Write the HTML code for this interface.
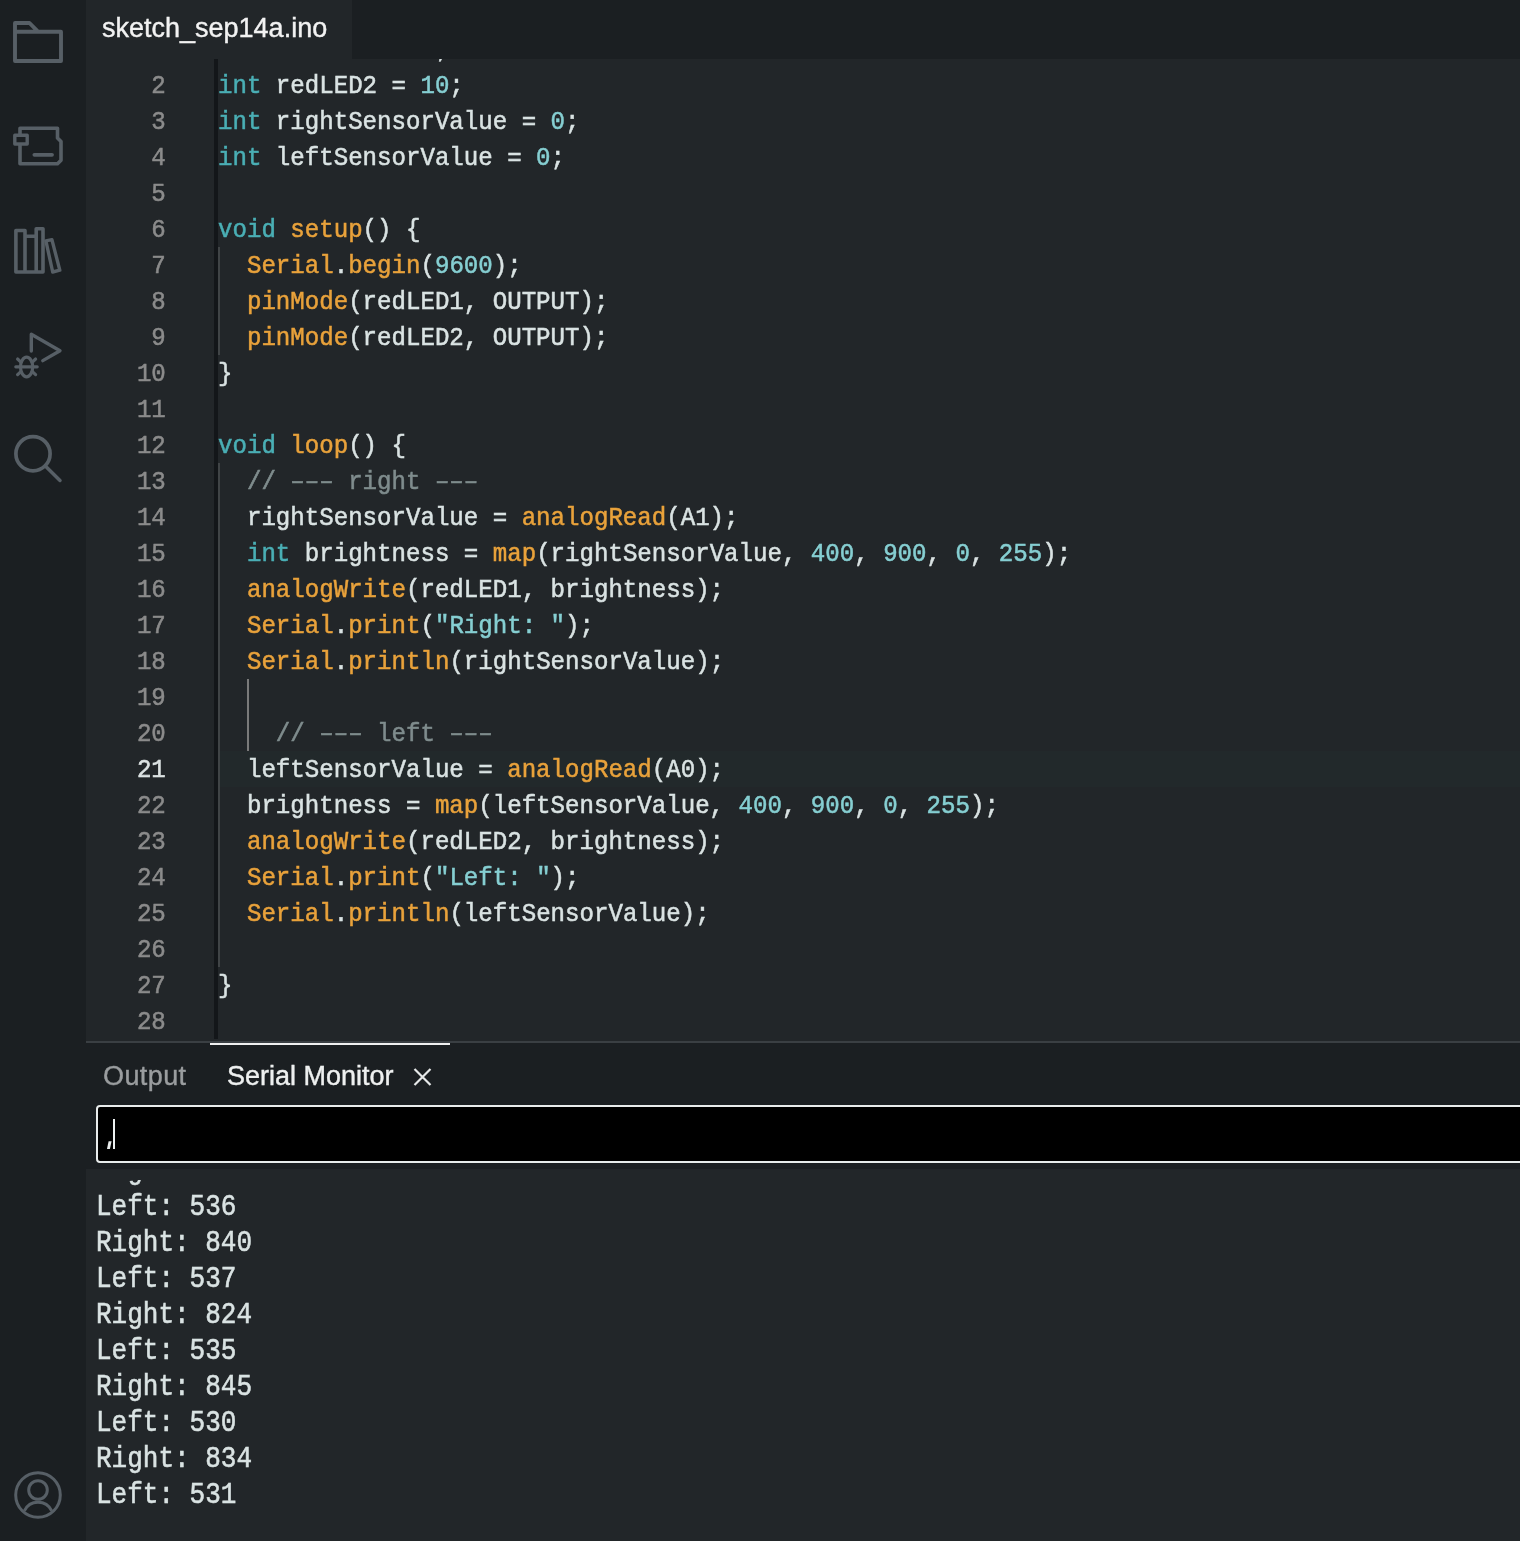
<!DOCTYPE html>
<html><head><meta charset="utf-8">
<style>
html,body{margin:0;padding:0;width:1520px;height:1541px;overflow:hidden;background:#1b1f22;}
*{box-sizing:border-box;}
.abs{position:absolute;}
#sidebar{position:absolute;left:0;top:0;width:86px;height:1541px;background:#1b1f22;}
#tabbar{position:absolute;left:86px;top:0;width:1434px;height:59px;background:#1b1f22;}
#tab{position:absolute;left:86px;top:0;width:266px;height:59px;background:#222629;}
#tabtxt{position:absolute;left:102px;top:8px;font:27px/40px "Liberation Sans",sans-serif;color:#f2f2f2;white-space:pre;-webkit-text-stroke:0.4px currentColor;will-change:transform;}
#editor{position:absolute;left:86px;top:59px;width:1434px;height:982px;background:#222629;overflow:hidden;}
.ln{position:absolute;left:0;width:79.8px;text-align:right;font:24.1px/36px "Liberation Mono",monospace;color:#858a8a;white-space:pre;transform:scaleY(1.1);transform-origin:0 24.4px;-webkit-text-stroke:0.5px currentColor;will-change:transform;}
.cl{position:absolute;left:132.2px;font:24.1px/36px "Liberation Mono",monospace;color:#dae3e3;white-space:pre;transform:scaleY(1.1);transform-origin:0 24.4px;-webkit-text-stroke:0.5px currentColor;will-change:transform;}
.k{color:#4aafb5}.f{color:#e9a23b}.n{color:#86cfd2}.c{color:#7f8c8d}.w{color:#dae3e3}
#darkline{position:absolute;left:128px;top:0;width:4px;height:980px;background:#131619;}
.guide{position:absolute;width:2px;background:#404446;}
#divider{position:absolute;left:86px;top:1041px;width:1434px;height:2px;background:#3a3f43;}
#panel{position:absolute;left:86px;top:1043px;width:1434px;height:498px;background:#1b1f22;}
#indicator{position:absolute;left:210px;top:1043px;width:240px;height:2px;background:#f0f0f0;}
.ptab{position:absolute;top:1056px;font:27px/40px "Liberation Sans",sans-serif;white-space:pre;-webkit-text-stroke:0.4px currentColor;will-change:transform;}
#input{position:absolute;left:96px;top:1105px;width:1440px;height:58px;background:#000;border:2px solid #e8ecec;border-radius:4px;}
#outarea{position:absolute;left:86px;top:1169px;width:1434px;height:372px;background:#222629;overflow:hidden;}
#outclip{position:absolute;left:0;top:10.5px;width:1434px;height:362px;overflow:hidden;}
.ol{position:absolute;left:10px;font:26px/36px "Liberation Mono",monospace;color:#dae3e3;white-space:pre;transform:scaleY(1.13);transform-origin:0 24.92px;-webkit-text-stroke:0.5px currentColor;will-change:transform;}
</style></head><body>
<div id="sidebar"></div>
<svg class="abs" style="left:0;top:0" width="86" height="1541" viewBox="0 0 86 1541" fill="none" stroke="#575f66" stroke-width="3.9" stroke-linejoin="round" stroke-linecap="round">
  <!-- folder -->
  <path d="M15 61 V23 H29.5 L38 31.7 H61 V61 Z M15 31.7 H38"/>
  <!-- board -->
  <path d="M20 128.3 H57.5 V138 L61 141.5 V160.3 L57.5 163.8 H20 Z" stroke-width="3.6"/>
  <rect x="14.8" y="135.2" width="12.4" height="8.8" fill="#1b1f22" stroke-width="3.4"/>
  <path d="M34.4 154.8 H52" stroke-width="3.8"/>
  <!-- library -->
  <path d="M15.9 272 V230.5 H25 V272 M25 236.3 H36.2 M36.2 272 V228.8 H43 V272 H15.9" stroke-width="3.6"/>
  <path d="M45.9 240.9 L51.9 239.6 L59.8 270.2 L52.7 272 Z" stroke-width="3.4"/>
  <!-- debug -->
  <path d="M31.3 351 V334.2 L60 350.7 L42.8 360.6" stroke-width="3.4"/>
  <ellipse cx="26.6" cy="367" rx="6.1" ry="9.8" stroke-width="3.2"/>
  <path d="M15.8 366.8 H37.2 M17.6 359 L20.6 361.8 M35.6 359 L32.6 361.8 M17.6 374.6 L20.6 371.8 M35.6 374.6 L32.6 371.8" stroke-width="3.2"/>
  <!-- search -->
  <circle cx="33" cy="453.7" r="17.1" stroke-width="3.7"/>
  <path d="M45.6 466.3 L60 480.5" stroke-width="3.5"/>
  <!-- user -->
  <circle cx="38" cy="1495" r="22.3" stroke-width="3"/>
  <circle cx="38" cy="1490" r="9.3" stroke-width="3"/>
  <path d="M24.3 1510.8 A15.2 15.2 0 0 1 51.7 1510.8" stroke-width="3" stroke-linecap="butt"/>
</svg>
<div id="tabbar"></div>
<div id="tab"></div>
<div id="tabtxt">sketch_sep14a.ino</div>
<div id="editor"><div class="abs" style="left:134px;top:692px;width:1300px;height:36px;background:#22292b"></div><div class="ln" style="top:-26.11px;color:#8b8b8b">1</div><div class="cl" style="top:-26.11px"><span class="k">int</span><span class="w"> redLED1 = </span><span class="n">9</span><span class="w">;</span></div><div class="ln" style="top:9.89px;color:#8b8b8b">2</div><div class="cl" style="top:9.89px"><span class="k">int</span><span class="w"> redLED2 = </span><span class="n">10</span><span class="w">;</span></div><div class="ln" style="top:45.89px;color:#8b8b8b">3</div><div class="cl" style="top:45.89px"><span class="k">int</span><span class="w"> rightSensorValue = </span><span class="n">0</span><span class="w">;</span></div><div class="ln" style="top:81.89px;color:#8b8b8b">4</div><div class="cl" style="top:81.89px"><span class="k">int</span><span class="w"> leftSensorValue = </span><span class="n">0</span><span class="w">;</span></div><div class="ln" style="top:117.89px;color:#8b8b8b">5</div><div class="ln" style="top:153.89px;color:#8b8b8b">6</div><div class="cl" style="top:153.89px"><span class="k">void</span><span class="w"> </span><span class="f">setup</span><span class="w">() {</span></div><div class="ln" style="top:189.89px;color:#8b8b8b">7</div><div class="cl" style="top:189.89px"><span class="w">  </span><span class="f">Serial</span><span class="w">.</span><span class="f">begin</span><span class="w">(</span><span class="n">9600</span><span class="w">);</span></div><div class="ln" style="top:225.89px;color:#8b8b8b">8</div><div class="cl" style="top:225.89px"><span class="w">  </span><span class="f">pinMode</span><span class="w">(redLED1, OUTPUT);</span></div><div class="ln" style="top:261.89px;color:#8b8b8b">9</div><div class="cl" style="top:261.89px"><span class="w">  </span><span class="f">pinMode</span><span class="w">(redLED2, OUTPUT);</span></div><div class="ln" style="top:297.89px;color:#8b8b8b">10</div><div class="cl" style="top:297.89px"><span class="w">}</span></div><div class="ln" style="top:333.89px;color:#8b8b8b">11</div><div class="ln" style="top:369.89px;color:#8b8b8b">12</div><div class="cl" style="top:369.89px"><span class="k">void</span><span class="w"> </span><span class="f">loop</span><span class="w">() {</span></div><div class="ln" style="top:405.89px;color:#8b8b8b">13</div><div class="cl" style="top:405.89px"><span class="w">  </span><span class="c">// ––– right –––</span></div><div class="ln" style="top:441.89px;color:#8b8b8b">14</div><div class="cl" style="top:441.89px"><span class="w">  rightSensorValue = </span><span class="f">analogRead</span><span class="w">(A1);</span></div><div class="ln" style="top:477.89px;color:#8b8b8b">15</div><div class="cl" style="top:477.89px"><span class="w">  </span><span class="k">int</span><span class="w"> brightness = </span><span class="f">map</span><span class="w">(rightSensorValue, </span><span class="n">400</span><span class="w">, </span><span class="n">900</span><span class="w">, </span><span class="n">0</span><span class="w">, </span><span class="n">255</span><span class="w">);</span></div><div class="ln" style="top:513.89px;color:#8b8b8b">16</div><div class="cl" style="top:513.89px"><span class="w">  </span><span class="f">analogWrite</span><span class="w">(redLED1, brightness);</span></div><div class="ln" style="top:549.89px;color:#8b8b8b">17</div><div class="cl" style="top:549.89px"><span class="w">  </span><span class="f">Serial</span><span class="w">.</span><span class="f">print</span><span class="w">(</span><span class="n">&quot;Right: &quot;</span><span class="w">);</span></div><div class="ln" style="top:585.89px;color:#8b8b8b">18</div><div class="cl" style="top:585.89px"><span class="w">  </span><span class="f">Serial</span><span class="w">.</span><span class="f">println</span><span class="w">(rightSensorValue);</span></div><div class="ln" style="top:621.89px;color:#8b8b8b">19</div><div class="ln" style="top:657.89px;color:#8b8b8b">20</div><div class="cl" style="top:657.89px"><span class="w">    </span><span class="c">// ––– left –––</span></div><div class="ln" style="top:693.89px;color:#dde3e3">21</div><div class="cl" style="top:693.89px"><span class="w">  leftSensorValue = </span><span class="f">analogRead</span><span class="w">(A0);</span></div><div class="ln" style="top:729.89px;color:#8b8b8b">22</div><div class="cl" style="top:729.89px"><span class="w">  brightness = </span><span class="f">map</span><span class="w">(leftSensorValue, </span><span class="n">400</span><span class="w">, </span><span class="n">900</span><span class="w">, </span><span class="n">0</span><span class="w">, </span><span class="n">255</span><span class="w">);</span></div><div class="ln" style="top:765.89px;color:#8b8b8b">23</div><div class="cl" style="top:765.89px"><span class="w">  </span><span class="f">analogWrite</span><span class="w">(redLED2, brightness);</span></div><div class="ln" style="top:801.89px;color:#8b8b8b">24</div><div class="cl" style="top:801.89px"><span class="w">  </span><span class="f">Serial</span><span class="w">.</span><span class="f">print</span><span class="w">(</span><span class="n">&quot;Left: &quot;</span><span class="w">);</span></div><div class="ln" style="top:837.89px;color:#8b8b8b">25</div><div class="cl" style="top:837.89px"><span class="w">  </span><span class="f">Serial</span><span class="w">.</span><span class="f">println</span><span class="w">(leftSensorValue);</span></div><div class="ln" style="top:873.89px;color:#8b8b8b">26</div><div class="ln" style="top:909.89px;color:#8b8b8b">27</div><div class="cl" style="top:909.89px"><span class="w">}</span></div><div class="ln" style="top:945.89px;color:#8b8b8b">28</div>
<div id="darkline"></div>
<div class="guide" style="left:132px;top:188px;height:108px"></div>
<div class="guide" style="left:132px;top:404px;height:504px"></div>
<div class="guide" style="left:161px;top:620px;height:72px;background:#7a7a7a"></div>
</div>
<div id="divider"></div>
<div id="panel"></div>
<div id="indicator"></div>
<div class="ptab" style="left:103px;color:#9a9d9f;letter-spacing:0.4px">Output</div>
<div class="ptab" style="left:227px;color:#eef0f0">Serial Monitor</div>
<svg class="abs" style="left:410px;top:1065px" width="26" height="24" viewBox="0 0 26 24" stroke="#e6e9e9" stroke-width="2.2" fill="none"><path d="M4.5 4 L20.5 20 M20.5 4 L4.5 20"/></svg>
<div id="input"></div>
<svg class="abs" style="left:100px;top:1135px" width="20" height="20" viewBox="100 1135 20 20"><path d="M108.6 1141.2 L111.6 1141.2 L109.9 1149 L107 1149 Z" fill="#e8ecec"/></svg>
<div class="abs" style="left:113px;top:1119px;width:2px;height:30px;background:#eef2f2"></div>
<div id="outarea"><div id="outclip"><div class="ol" style="top:-25.02px">Right: 840</div><div class="ol" style="top:10.98px">Left: 536</div><div class="ol" style="top:46.98px">Right: 840</div><div class="ol" style="top:82.98px">Left: 537</div><div class="ol" style="top:118.98px">Right: 824</div><div class="ol" style="top:154.98px">Left: 535</div><div class="ol" style="top:190.98px">Right: 845</div><div class="ol" style="top:226.98px">Left: 530</div><div class="ol" style="top:262.98px">Right: 834</div><div class="ol" style="top:298.98px">Left: 531</div></div></div>
</body></html>
